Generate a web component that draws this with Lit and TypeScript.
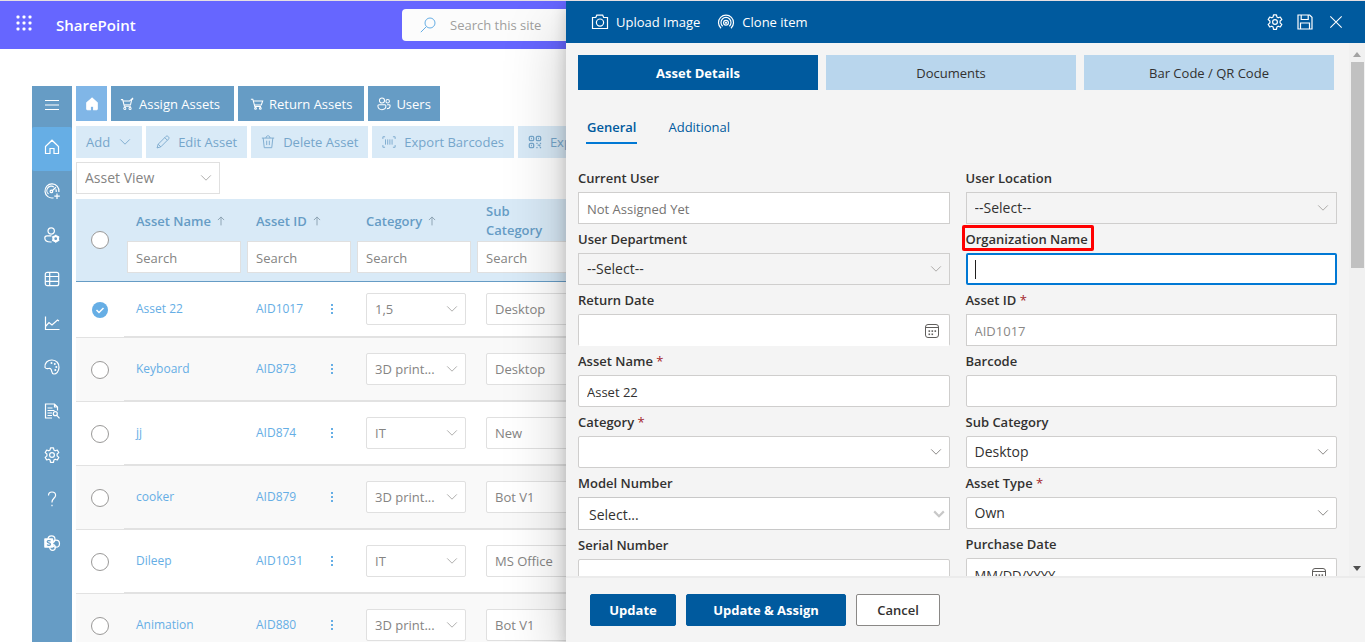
import { LitElement, html, svg, css, nothing } from "lit";
import type { SVGTemplateResult } from "lit";
import { customElement, property } from "lit/decorators.js";
import { classMap } from "lit/directives/class-map.js";

const GEAR = svg`<path d="M6.500 .8h3l.4 2.200 1.300.8 2.100-.8 1.500 2.600-1.700 1.400v1.900l1.700 1.500-1.500 2.600-2.100-.8-1.300.8-.4 2.300h-3l-.4-2.300-1.300-.8-2.100.8-1.500-2.600 1.700-1.500V7L1.200 5.600l1.500-2.600 2.100.8 1.300-.8z" stroke-linejoin="round"/><circle cx="8" cy="8" r="2.400"/>`;
const CART = svg`<path d="M1 2.500h2.200l2.300 8.300h7M3.700 4.500h10.800l-1.600 4.600H5"/><circle cx="6.300" cy="13" r="1"/><circle cx="11.800" cy="13" r="1"/>`;

const ICONS: Record<string, SVGTemplateResult> = {
  waffle: svg`<g fill="currentColor" stroke="none">${[2, 8, 14].map((y) => [2, 8, 14].map((x) => svg`<rect x=${x - 1.5} y=${y - 1.5} width="3" height="3" rx="1"/>`))}</g>`,
  menu: svg`<path d="M1 3.500h14M1 8h14M1 12.500h14"/>`,
  home: svg`<path d="M1.500 7.500 8 1.200l6.500 6.300v7H10V9.500H6v5H1.500z"/>`,
  homeFill: svg`<path d="M8 1.200 2 6.600v7.200c0 .400.300.700.700.700h3.400v-4h3.800v4h3.400c.400 0 .700-.300.700-.700V6.600z" fill="currentColor"/>`,
  gauge: svg`<path d="M9.500 14.800A7 7 0 1 1 14.900 9"/><path d="M4.500 11A4.300 4.300 0 0 1 10 4.100M11.800 6.200a4.300 4.300 0 0 1 .400 2.800M7.700 8.200l4.200-4"/><circle cx="7.400" cy="8.400" r="1.300"/><path d="M13 10.500v5.500M10.300 13.200h5.500"/>`,
  userGear: svg`<circle cx="7.200" cy="4" r="3.200"/><path d="M7.500 8.800H3C1.600 8.800.800 9.700.800 11c0 2.400 2.200 4 5.800 4h1"/><circle cx="11.700" cy="11.700" r="2.400" stroke-width="2"/><path d="M11.700 7.700v8M8.200 9.700l7 4M15.200 9.700l-7 4" stroke-width="1.500"/><circle cx="11.700" cy="11.700" r=".8" fill="#669cc5" stroke="#669cc5"/>`,
  table: svg`<rect x="1.300" y="1.300" width="13.400" height="13.400" rx="2"/><path d="M1.300 5.500h13.400M1.300 10.300h13.400M5.700 1.300v13.400"/>`,
  chart: svg`<path d="M1.500 1.500v13h14M1.500 11.500l3.500-4 3 2.500 5.500-5 1.500 1"/>`,
  palette: svg`<path d="M1 8.500C.400 4 3.600.900 8 1c4.500.100 7.200 3.400 7 7.400-.200 4-2.600 6.900-5.300 6.600-2.600-.300-1.400-3.600-3-5.200C5 8.200 3 11.300 1 8.500z"/><g fill="currentColor" stroke="none"><circle cx="7.500" cy="4" r="1"/><circle cx="10.800" cy="5" r="1"/><circle cx="12.300" cy="8" r="1"/><circle cx="11.300" cy="11" r="1"/></g>`,
  report: svg`<path d="M8 15H1.500V1h9l3 3v3.500M10.500 1v3h3M3.500 5h5M3.500 7.500h7M3.500 10h4.500M3.500 12.500H8"/><circle cx="11.300" cy="10.700" r="2"/><path d="m12.800 12.300 2.700 3"/>`,
  gear: GEAR,
  help: svg`<path d="M4.500 4.500C4.500 2.300 6 1 8 1s3.600 1.300 3.600 3.300C11.600 7.200 8 7.500 8 11v.500M8 13.700v1.500"/>`,
  sp: svg`<circle cx="7.500" cy="4.300" r="3.500"/><circle cx="12" cy="8.700" r="3.500"/><circle cx="8.500" cy="12.500" r="2.800"/><rect x=".2" y="3.300" width="9" height="9.400" rx=".8" fill="currentColor" stroke="none"/><path d="M6.600 6.200c-.900-.900-3.400-.800-3.400.600 0 1.500 3.300.800 3.300 2.400 0 1.400-2.500 1.500-3.500.500" stroke="#669cc5" stroke-width="1.200"/>`,
  cart: CART,
  cartOut: svg`<path d="M1 3h2l2 7.500h7.500M3.500 4.500h8M12 9l1.500-6.500M12.500 2.500h2.500M11 4.500 15 1"/><path d="M4.800 9h7.500"/><circle cx="5.500" cy="13" r="1.200"/><circle cx="11.500" cy="13" r="1.200"/>`,
  users: svg`<circle cx="5.700" cy="4" r="2.900"/><circle cx="12.200" cy="4.800" r="2"/><path d="M2.500 8.800h6.400c.8 0 1.300.5 1.300 1.300 0 2.800-1.600 4.400-4.500 4.400S1 13 1 10.100c0-.8.600-1.300 1.500-1.300zM11.500 8.800h2.400c.7 0 1.100.4 1.100 1.100 0 2.200-1.300 3.400-3.700 3.400"/>`,
  chevron: svg`<path d="m2.500 5 5.500 5.500L13.500 5"/>`,
  pencil: svg`<path d="M1.200 14.800 2.500 10.500 11.300 1.700c1.700-1.700 4.700 1.200 3 3L5.500 13.500zM10 3l3 3M2.500 10.500l3 3"/>`,
  trash: svg`<path d="M1 3.500h14M5.700 3.500C5.700 0 10.300 0 10.300 3.500M2.500 3.500l1.200 11h8.600l1.200-11M6.500 6.500v5M9.500 6.500v5"/>`,
  barcode: svg`<path d="M1 4.500V2h2.500M12.500 2H15v2.500M15 11.500V14h-2.500M3.500 14H1v-2.500M4 5v6M6.500 5v6M9 5v6M11.500 5v6"/>`,
  qr: svg`<rect x="1.500" y="1.500" width="5" height="5" rx="1.500" stroke-width="1.500"/><rect x="9.500" y="1.500" width="5" height="5" rx="1.500" stroke-width="1.500"/><rect x="1.500" y="9.500" width="5" height="5" rx="1.500" stroke-width="1.500"/><path d="M3.500 4h1M11.500 4h1M3.500 12h1M9.500 9.500h1.500M13.500 9.500H15M11 11.500h2.500v1.500M9.500 14.500h1.500M13.500 14.500H15" stroke-width="1.500"/>`,
  search: svg`<circle cx="10" cy="6" r="5"/><path d="M6.400 9.600.800 15.200"/>`,
  arrowUp: svg`<path d="M8 15V1.500M3 6.500l5-5 5 5"/>`,
  camera: svg`<path d="M.5 3.500h3.300l1-2.300h5.900l1 2.300h3.800v11H.5z"/><circle cx="8" cy="8.600" r="3.600"/>`,
  clone: svg`<path d="M3 14.200A7.500 7.500 0 1 1 13 14.200M4.700 12.200A5 5 0 1 1 11.300 12.200"/><circle cx="8" cy="8.800" r="2.400"/><circle cx="8" cy="8.800" r=".5"/>`,
  save: svg`<path d="M1 1h11.700L15 3.300V15H1zM4.200 1v4.500h7V1M3.500 15V9h9v6"/>`,
  close: svg`<path d="m1.500 1.500 13 13M14.500 1.500l-13 13"/>`,
  calendar: svg`<rect x="1.500" y="1.500" width="13" height="13" rx="2.500"/><path d="M1.500 4.500h13"/><g fill="currentColor" stroke="none">${[[7.5, 7.3], [10.5, 7.3], [4.5, 7.3], [4.5, 10.5], [7.5, 10.5]].map(([x, y]) => svg`<rect x=${x} y=${y} width="1.600" height="1.600"/>`)}</g>`,
};

const icon = (name: string, cls = "") =>
  html`<svg class="icon ${cls}" viewBox="0 0 16 16" fill="none" stroke="currentColor" aria-hidden="true">${ICONS[name]}</svg>`;

const shared = css`
  * { box-sizing: border-box; }
  button, input, select { font: inherit; color: inherit; margin: 0; border-radius: 0; min-width: 0; }
  button { cursor: pointer; border: 0; padding: 0; background: none; }
  input:focus { outline: none; }
  .icon { width: 16px; height: 16px; flex: none; overflow: visible; }
`;

interface Asset { name: string; id: string; category: string; sub: string; checked?: boolean }

const ASSETS: Asset[] = [
  { name: "Asset 22", id: "AID1017", category: "1,5", sub: "Desktop", checked: true },
  { name: "Keyboard", id: "AID873", category: "3D print...", sub: "Desktop" },
  { name: "jj", id: "AID874", category: "IT", sub: "New" },
  { name: "cooker", id: "AID879", category: "3D print...", sub: "Bot V1" },
  { name: "Dileep", id: "AID1031", category: "IT", sub: "MS Office" },
  { name: "Animation", id: "AID880", category: "3D print...", sub: "Bot V1" },
];

@customElement("asset-list")
class AssetList extends LitElement {
  static styles = [shared, css`
    :host { display: block; }
    .views { display: flex; margin-bottom: 5px; }
    .pick { position: relative; display: block; }
    .pick select { width: 100%; height: 32px; padding: 0 24px 0 8px; border: 1px solid #e0e0e0; background: #fff; color: #858483; appearance: none; font-size: 14px; }
    .pick .icon { position: absolute; right: 7px; top: 9px; width: 14px; height: 14px; color: #a3a2a1; pointer-events: none; }
    .view { width: 144px; }
    .category { width: 100px; }
    .pick.category select { border-radius: 2px; font-size: 13px; }
    .grid { width: 100%; border-collapse: separate; border-spacing: 0; table-layout: fixed; }
    .c-check { width: 48px; }
    .c-wide { width: 120px; }
    .c-id { width: 110px; }
    th { padding: 0 3px 8px; background: #d9eaf7; border-bottom: 1px solid #669cc5; text-align: left; vertical-align: top; color: #669cc5; font-weight: 600; font-size: 13px; }
    .check { padding: 0; vertical-align: middle; }
    .title { display: flex; align-items: center; height: 42px; gap: 5px; padding: 2px 9px 0; line-height: 19px; }
    .title .icon { width: 10px; height: 10px; color: #8aa0b0; stroke-width: 1.5; }
    .filter { display: block; width: 100%; height: 32px; padding: 2px 8px 0; border: 1px solid #e0e0e0; background: #fff; font-weight: 400; color: #858483; }
    .filter::placeholder { color: #858483; opacity: 1; }
    .sub { width: 114px; }
    .round { appearance: none; display: block; width: 18px; height: 18px; margin: 0 auto; border: 1px solid #9a9998; border-radius: 50%; background: #fff; }
    .tick { display: grid; place-items: center; position: relative; }
    .round:checked { width: 16px; height: 16px; border: 0; background: #66aee5; }
    .mark { position: absolute; width: 10px; height: 10px; color: #fff; pointer-events: none; }
    td { height: 64px; padding: 0 12px; border-bottom: 2px solid #e2e2e2; }
    tbody tr:first-child td { height: 56px; }
    tbody tr:nth-child(even) td { background: #f9f9f9; }
    td.check { padding: 0; border-bottom-width: 1px; }
    .link { color: #66aee5; text-decoration: none; font-size: 12px; line-height: 16px; }
    .cell { display: flex; justify-content: space-between; align-items: center; padding: 0 6px 1px 0; }
    .name { padding-bottom: 3px; }
    .more { display: grid; gap: 2px; padding: 3px; }
    .more i { width: 2px; height: 2px; background: #66aee5; }
  `];

  private picker(value: string, label: string, cls: string) {
    return html`<label class="pick ${cls}"><select aria-label=${label}><option>${value}</option></select>${icon("chevron")}</label>`;
  }

  private head(title: unknown, label: string, sortable = true, cls = "") {
    return html`<th scope="col"><div class="title">${title}${sortable ? icon("arrowUp") : nothing}</div>
      <input class="filter ${cls}" placeholder="Search" aria-label="Filter by ${label}"></th>`;
  }

  render() {
    return html`
      <div class="views">${this.picker("Asset View", "View", "view")}</div>
      <table class="grid">
        <colgroup><col class="c-check"><col class="c-wide"><col class="c-id"><col class="c-wide"><col></colgroup>
        <thead><tr>
          <th class="check"><input class="round" type="checkbox" aria-label="Select all"></th>
          ${this.head("Asset Name", "name")}${this.head("Asset ID", "id")}${this.head("Category", "category")}
          ${this.head(html`<span>Sub<br>Category</span>`, "sub category", false, "sub")}
        </tr></thead>
        <tbody>${ASSETS.map((a) => html`<tr>
          <td class="check"><span class="tick"><input class="round" type="checkbox" aria-label="Select ${a.name}" .checked=${!!a.checked}>
            ${a.checked ? html`<svg class="mark" viewBox="0 0 10 10" fill="none" stroke="currentColor" stroke-width="1.500"><path d="m1.500 5 2.500 2.500 4.500-4.500"/></svg>` : nothing}</span></td>
          <td><div class="name"><a class="link" href="#">${a.name}</a></div></td>
          <td><div class="cell"><a class="link" href="#">${a.id}</a><button class="more" aria-label="More actions"><i></i><i></i><i></i></button></div></td>
          <td>${this.picker(a.category, "Category", "category")}</td>
          <td>${this.picker(a.sub, "Sub category", "category")}</td>
        </tr>`)}</tbody>
      </table>`;
  }
}

interface Field {
  label: string; kind: "text" | "select" | "date" | "combo"; value?: string; placeholder?: string;
  required?: boolean; disabled?: boolean; active?: boolean; soft?: boolean;
}

const LEFT: Field[] = [
  { label: "Current User", kind: "text", placeholder: "Not Assigned Yet" },
  { label: "User Department", kind: "select", value: "--Select--", disabled: true },
  { label: "Return Date", kind: "date" },
  { label: "Asset Name", kind: "text", value: "Asset 22", required: true, soft: true },
  { label: "Category", kind: "select", value: "", required: true, soft: true },
  { label: "Model Number", kind: "combo", value: "Select..." },
  { label: "Serial Number", kind: "text", soft: true },
];
const RIGHT: Field[] = [
  { label: "User Location", kind: "select", value: "--Select--", disabled: true },
  { label: "Organization Name", kind: "text", active: true },
  { label: "Asset ID", kind: "text", value: "AID1017", required: true, disabled: true },
  { label: "Barcode", kind: "text", soft: true },
  { label: "Sub Category", kind: "select", value: "Desktop", soft: true },
  { label: "Asset Type", kind: "select", value: "Own", required: true, soft: true },
  { label: "Purchase Date", kind: "date", placeholder: "MM/DD/YYYY" },
];

@customElement("form-field")
class FormField extends LitElement {
  @property({ attribute: false }) field!: Field;

  static styles = [shared, css`
    :host { display: block; }
    .label { display: block; padding: 6px 0 4px; font-size: 13px; font-weight: 600; line-height: 19px; }
    .text { position: relative; }
    .required { color: #a4262c; font-weight: 400; }
    .boxed::after { content: ""; position: absolute; inset: -5px -6px -3px -4px; border: 3px solid #f00; border-radius: 2px; }
    .control { position: relative; }
    .box { display: block; width: 100%; height: 32px; padding: 2px 8px 0; border: 1px solid #cfcecd; background: #fff; appearance: none; font-size: 13px; opacity: 1; }
    .box::placeholder { color: #757371; opacity: 1; }
    select.box { padding-top: 0; font-size: 14px; }
    .soft { border-radius: 2px; }
    .box:disabled { color: #8a8886; }
    select.box:disabled { color: #323130; background: #f4f4f4; }
    .date { border-bottom-color: #fff; border-radius: 2px; }
    .date::placeholder { color: #323130; }
    select.combo { height: 33px; padding: 2px 10px 0; border-color: #c8c8c8; }
    .active { border: 2px solid #0078d4; border-radius: 2px; caret-color: transparent; }
    .caret { position: absolute; left: 9px; top: 7px; width: 1px; height: 19px; background: #201f1e; }
    .mark { position: absolute; right: 7px; top: 9px; width: 14px; height: 14px; color: #7a7876; pointer-events: none; }
    .dim { color: #a19f9d; }
    .calendar { right: 10px; width: 16px; height: 16px; color: #605e5c; }
    .thick { right: 4px; top: 10px; stroke-width: 2.5; color: #c8c8c8; }
  `];

  render() {
    const f = this.field;
    const cls = classMap({ box: true, soft: !!f.soft, active: !!f.active, date: f.kind === "date", combo: f.kind === "combo" });
    const isSelect = f.kind === "select" || f.kind === "combo";
    return html`
      <label class="label" for="control"><span class=${classMap({ text: true, boxed: !!f.active })}>${f.label}</span>${f.required ? html`<span class="required"> *</span>` : nothing}</label>
      <div class="control">
        ${isSelect
          ? html`<select id="control" class=${cls} ?disabled=${f.disabled}><option>${f.value}</option></select>
              ${icon("chevron", f.kind === "combo" ? "mark thick" : f.disabled ? "mark dim" : "mark")}`
          : html`<input id="control" class=${cls} .value=${f.value ?? ""} placeholder=${f.placeholder ?? ""} ?disabled=${f.disabled}>`}
        ${f.kind === "date" ? icon("calendar", "mark calendar") : nothing}
        ${f.active ? html`<span class="caret"></span>` : nothing}
      </div>`;
  }
}

@customElement("asset-panel")
class AssetPanel extends LitElement {
  static styles = [shared, css`
    :host { display: flex; flex-direction: column; background: #f4f4f4; color: #323130; }
    .bar { display: flex; align-items: center; gap: 14px; height: 42px; flex: none; padding: 0 22px 0 26px; background: #005a9e; color: #fff; }
    .bar button { display: flex; align-items: center; gap: 8px; font-size: 13px; }
    .bar .icon { stroke-width: 1.2; }
    .bar .action { padding-right: 4px; }
    .bar .push { margin-left: auto; }
    .bar .x { width: 14px; height: 14px; margin-left: 2px; }
    .main { display: flex; flex: 1; min-height: 0; }
    .scroll { flex: 1; min-width: 0; overflow: hidden; padding: 12px 12px 0; }
    .tabs { display: flex; gap: 8px; margin-right: 3px; }
    .tab { flex: 25 1 0; height: 35px; background: #b9d6ed; font-size: 13px; }
    .tab.on { flex-grow: 24; background: #005a9e; color: #fff; font-weight: 700; }
    .pivot { display: flex; gap: 30px; margin: 18px 8px 19px; color: #005a9e; }
    .pivot button { height: 36px; padding: 4px 1px 0; font-size: 13px; border-bottom: 2px solid transparent; }
    .pivot .on { font-weight: 600; border-color: #0078d4; }
    .form { display: grid; grid-template-columns: 1fr 1fr; gap: 16px; align-items: start; }
    .track { display: flex; flex-direction: column; align-items: center; width: 16px; padding: 9px 0 5px; background: #f1f1f1; }
    .thumb { width: 13px; height: 206px; margin: 5px 0 auto 1px; background: #c1c1c1; }
    .up, .down { border: 4px solid transparent; }
    .up { border-top: 0; border-bottom-color: #a3a3a3; border-bottom-width: 5px; }
    .down { border-bottom: 0; border-top-color: #505050; border-top-width: 5px; }
    .foot { display: flex; gap: 10px; flex: none; padding: 16px 24px; border-top: 2px solid #ebebeb; }
    .foot button { height: 32px; min-width: 86px; padding: 0 16px; border: 1px solid #005a9e; border-radius: 2px; background: #005a9e; color: #fff; font-size: 13px; font-weight: 700; }
    .foot .wide { min-width: 160px; }
    .foot .plain { min-width: 84px; background: #fff; color: #323130; border-color: #8a8886; font-weight: 600; }
  `];

  render() {
    const col = (fs: Field[]) => html`<div>${fs.map((f) => html`<form-field .field=${f}></form-field>`)}</div>`;
    return html`
      <header class="bar">
        <button class="action">${icon("camera")}Upload Image</button>
        <button class="action">${icon("clone")}Clone item</button>
        <button class="push" aria-label="Settings">${icon("gear")}</button>
        <button aria-label="Save">${icon("save")}</button>
        <button aria-label="Close">${icon("close", "x")}</button>
      </header>
      <div class="main">
        <div class="scroll">
          <nav class="tabs"><button class="tab on">Asset Details</button><button class="tab">Documents</button><button class="tab">Bar Code / QR Code</button></nav>
          <nav class="pivot"><button class="on">General</button><button>Additional</button></nav>
          <div class="form">${col(LEFT)}${col(RIGHT)}</div>
        </div>
        <div class="track" aria-hidden="true"><i class="up"></i><i class="thumb"></i><i class="down"></i></div>
      </div>
      <footer class="foot"><button>Update</button><button class="wide">Update &amp; Assign</button><button class="plain">Cancel</button></footer>`;
  }
}

const SIDE = ["gauge", "userGear", "table", "chart", "palette", "report", "gear", "help", "sp"];

@customElement("app-root")
class AppRoot extends LitElement {
  static styles = [shared, css`
    :host { --drawer-left: 566px; display: block; box-sizing: border-box; position: relative; height: 100vh; overflow: hidden; border-top: 1px solid #e6dfe2; background: #fff; font: 14px/20px "Open Sans", "Noto Sans", sans-serif; color: #323130; }
    .page { display: flex; flex-direction: column; height: 100%; }
    .suite { display: flex; align-items: center; height: 48px; flex: none; padding: 0 16px; background: #66f; color: #fff; }
    .brand { margin-left: 24px; font-size: 15px; font-weight: 600; width: 346px; }
    .find { display: flex; align-items: center; gap: 14px; width: 468px; height: 32px; padding: 0 18px; border-radius: 4px; background: #fcfcfc; color: #66aee5; }
    .find input { flex: 1; border: 0; padding: 0; background: none; font-size: 13px; }
    .find input::placeholder { color: #a09f9e; opacity: 1; }
    .body { display: flex; gap: 4px; flex: 1; min-height: 0; padding: 37px 0 0 32px; }
    .side { display: flex; flex-direction: column; width: 40px; flex: none; background: #669cc5; color: #fff; }
    .side button { display: grid; place-items: center; height: 44px; flex: none; padding-bottom: 4px; }
    .side .icon { stroke-width: 1.2; }
    .side .menu { height: 41px; }
    .side .on { background: #66aee5; border-radius: 2px; }
    .content { flex: 1; min-width: 0; overflow: hidden; }
    .row { display: flex; gap: 4px; margin-bottom: 5px; }
    .tools { margin-bottom: 4px; max-width: calc(var(--drawer-left) - 76px); overflow: hidden; }
    .nav { display: flex; align-items: center; gap: 5px; height: 35px; padding: 0 9px; background: #669cc5; color: #fff; font-size: 13px; }
    .nav .icon { width: 14px; height: 14px; stroke-width: 1.2; }
    .nav.lead { padding-right: 14px; }
    .nav.mid { padding: 0 12px; }
    .nav.home { justify-content: center; width: 31px; padding: 0; background: #80b6e7; }
    .cmd { display: flex; align-items: center; gap: 8px; height: 32px; padding: 0 10px; background: #d9eaf7; color: #76a6cb; font-size: 13px; white-space: nowrap; flex: none; }
    .cmd .icon { width: 14px; height: 14px; }
    .cmd:last-child { flex: 1; overflow: hidden; }
    .panel { position: absolute; top: 0; bottom: 0; left: var(--drawer-left); right: 0; box-shadow: 0 26px 58px rgba(0, 0, 0, 0.22), 0 5px 14px rgba(0, 0, 0, 0.18); }
  `];

  render() {
    return html`
      <div class="page">
        <header class="suite">
          <button aria-label="App launcher">${icon("waffle")}</button><span class="brand">SharePoint</span>
          <label class="find">${icon("search")}<input placeholder="Search this site" aria-label="Search this site"></label>
        </header>
        <div class="body">
          <nav class="side">
            <button class="menu" aria-label="Menu">${icon("menu")}</button>
            <button class="on" aria-label="Home">${icon("home")}</button>
            ${SIDE.map((s) => html`<button aria-label=${s}>${icon(s)}</button>`)}
          </nav>
          <main class="content">
            <nav class="row">
              <button class="nav home" aria-label="Home">${icon("homeFill")}</button>
              <button class="nav lead">${icon("cartOut")}Assign Assets</button>
              <button class="nav mid">${icon("cart")}Return Assets</button>
              <button class="nav">${icon("users")}Users</button>
            </nav>
            <div class="row tools">
              <button class="cmd">Add${icon("chevron")}</button>
              <button class="cmd">${icon("pencil")}Edit Asset</button>
              <button class="cmd">${icon("trash")}Delete Asset</button>
              <button class="cmd">${icon("barcode")}Export Barcodes</button>
              <button class="cmd">${icon("qr")}Export</button>
            </div>
            <asset-list></asset-list>
          </main>
        </div>
      </div>
      <asset-panel class="panel"></asset-panel>`;
  }
}
